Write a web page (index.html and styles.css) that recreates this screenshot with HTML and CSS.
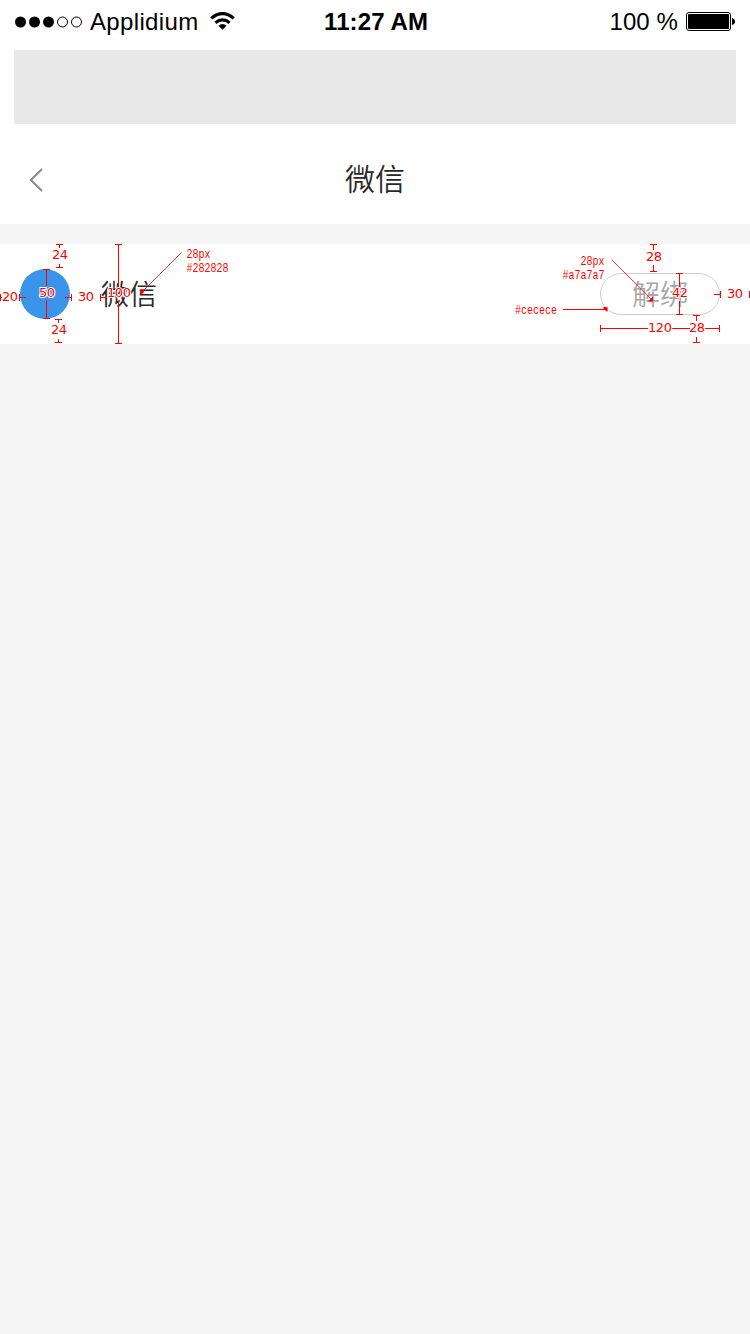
FILE: index.html
```html
<!DOCTYPE html>
<html lang="zh-CN">
<head>
<meta charset="utf-8">
<title>微信</title>
<link rel="stylesheet" href="styles.css">
</head>
<body>
<header class="status">
  <div class="carrier">
    <svg class="signal" width="68" height="12" viewBox="0 0 68 12">
      <circle cx="5.5" cy="6" r="5.5"/><circle cx="19.5" cy="6" r="5.5"/><circle cx="33.5" cy="6" r="5.5"/>
      <circle class="empty" cx="47.5" cy="6" r="5"/><circle class="empty" cx="61.5" cy="6" r="5"/>
    </svg>
    <span class="carrier-name">Applidium</span>
    <svg class="wifi" width="26" height="19" viewBox="0 0 26 19">
      <path class="arc" d="M1.200 6.400Q12.500 -3.200 23.800 6.400M5.400 10.700Q12.500 5 19.600 10.700"/>
      <path d="M8.500 13.700Q12.500 10.400 16.500 13.700L12.500 17.700Z"/>
    </svg>
  </div>
  <span class="time">11:27 AM</span>
  <div class="power">
    <span class="percent">100 %</span>
    <svg width="49" height="19" viewBox="0 0 49 19">
      <rect class="case" x=".5" y=".5" width="44" height="18" rx="2.5"/>
      <rect x="2" y="2" width="41" height="15" rx="1"/>
      <path d="M46 6Q49 7 49 9.5Q49 12 46 13Z"/>
    </svg>
  </div>
</header>
<div class="banner"></div>
<nav class="nav">
  <svg class="back" width="14" height="24" viewBox="0 0 14 24"><path d="M13 1L1.800 12L13 23"/></svg>
  <h1 class="title">微信</h1>
</nav>
<main class="list">
  <section class="row">
    <span class="avatar"></span>
    <span class="name">微信</span>
    <button class="unbind"><span class="unbind-label">解绑</span></button>
    <svg class="specs" width="750" height="100" viewBox="0 244 750 100">
      <g class="lines">
        <path d="M56 244.5h7M59.5 244v4M56 267.5h7M59.5 264v4M55 319.5h7M58.5 319v4M55 342.5h7M58.5 339v4"/>
        <path d="M.5 294v7M0 297.5h2M19.5 294v7M19 297.5h7M65 297.5h7M71.5 294v7M100.500 294v7M101 297.500h6"/>
        <path d="M43 269.500h7M46.500 269v17M46.500 300v19M43 318.500h7"/>
        <path d="M115 244.500h7M118.500 244v43M118.500 301v43M115 343.500h7"/>
        <path d="M650 244.500h7M653.500 244v6M650 271.500h7M653.500 265v6"/>
        <path d="M676 273.500h7M679.500 273v14M679.500 301v14M676 314.500h7"/>
        <path d="M693 315.500h7M696.500 315v6M693 342.500h7M696.500 337v6"/>
        <path d="M600.500 325v7M600 328.500h48M672 328.500h18M705 328.500h15M719.500 325v7"/>
        <path d="M714 294.500h7M720.500 291v7M749.500 291v7"/>
      </g>
      <g class="leaders">
        <path d="M181.500 252.500L142 292M611.500 259.500L652 300"/>
        <path class="lines" d="M563 309.500h43"/>
        <path class="tip" d="M140 289.500h4v2l-2 3h-2zM603.500 307h4v5l-4-3zM653 296.500v5h-5z"/>
      </g>
      <g class="sizes">
        <text x="52" y="259" textLength="16">24</text>
        <text x="51" y="334" textLength="16">24</text>
        <text x="2" y="301" textLength="16">20</text>
        <text x="39" y="297" textLength="16">50</text>
        <text x="78" y="301" textLength="16">30</text>
        <text x="107" y="297" textLength="24">100</text>
        <text x="646" y="261" textLength="16">28</text>
        <text x="672" y="297" textLength="16">42</text>
        <text x="727" y="298" textLength="16">30</text>
        <text x="648" y="332" textLength="24">120</text>
        <text x="689" y="332" textLength="16">28</text>
      </g>
      <g class="notes">
        <text x="186.500" y="257.500" textLength="24" lengthAdjust="spacingAndGlyphs">28px</text>
        <text x="186.500" y="272" textLength="42" lengthAdjust="spacingAndGlyphs">#282828</text>
        <text x="580.500" y="264.500" textLength="24" lengthAdjust="spacingAndGlyphs">28px</text>
        <text x="562.500" y="279" textLength="42" lengthAdjust="spacingAndGlyphs">#a7a7a7</text>
        <text x="515" y="314" textLength="42" lengthAdjust="spacingAndGlyphs">#cecece</text>
      </g>
    </svg>
  </section>
</main>
</body>
</html>
```
FILE: styles.css
```css
* { box-sizing: border-box; }
body { margin: 0; width: 750px; min-height: 1334px; background: #f5f5f5; font-family: "Liberation Sans", "Noto Sans CJK SC", sans-serif; }
.status { display: grid; grid-template-columns: 1fr auto 1fr; height: 50px; padding: 0 15px 7px; align-items: center; background: #fff; color: #000; font-size: 24px; line-height: 28px; }
.carrier, .power { display: flex; align-items: center; }
.power { justify-content: flex-end; gap: 8px; }
.signal { margin-right: 7px; }
.carrier-name { width: 108px; margin-right: 12px; letter-spacing: .35px; white-space: nowrap; }
.empty { fill: none; stroke: #000; stroke-width: 1; }
.arc { fill: none; stroke: #000; stroke-width: 3.2; }
.time { font-weight: bold; padding-left: 2px; letter-spacing: .1px; }
.percent { letter-spacing: .1px; }
.case { fill: none; stroke: #000; }
.banner { height: 74px; background: #e8e8e8; border: solid #fff; border-width: 0 14px; }
.nav { display: grid; grid-template-columns: 14px 1fr 14px; align-items: center; height: 100px; padding: 0 29px 0; background: #fff; }
.back { margin-top: 12px; fill: none; stroke: #858587; stroke-width: 1.8; }
.title { margin: 6px 0 0; text-align: center; font: 350 30px/40px "Noto Sans CJK SC DemiLight", "Noto Sans CJK SC", sans-serif; color: #282828; }
.list { padding-top: 20px; }
.row { position: relative; display: flex; align-items: center; height: 100px; padding: 0 30px 0 20px; background: #fff; overflow: hidden; }
.avatar { width: 50px; height: 50px; border-radius: 50%; background: #3a94e9; }
.name { margin: 0 0 3px 31px; font: 350 28px/40px "Noto Sans CJK SC DemiLight", "Noto Sans CJK SC", sans-serif; color: #282828; }
.unbind { display: flex; justify-content: center; width: 120px; height: 42px; margin-left: auto; padding: 0; border: 1px solid #cecece; border-radius: 21px; background: #fff; font: 350 28px/40px "Noto Sans CJK SC DemiLight", "Noto Sans CJK SC", sans-serif; color: #a7a7a7; }
.unbind-label { margin-top: -1px; }
.specs { position: absolute; left: 0; top: 0; }
.lines { fill: none; stroke: #f00; stroke-width: 1; shape-rendering: crispEdges; }
.leaders { fill: none; stroke: #f00; stroke-width: .8; }
.leaders .tip { fill: #f00; stroke: none; }
.sizes { font: 13px "DejaVu Sans", sans-serif; fill: #f00; stroke: #fff; stroke-width: 2px; paint-order: stroke; }
.notes { font: 12px "Liberation Mono", monospace; fill: #f00; }
```
